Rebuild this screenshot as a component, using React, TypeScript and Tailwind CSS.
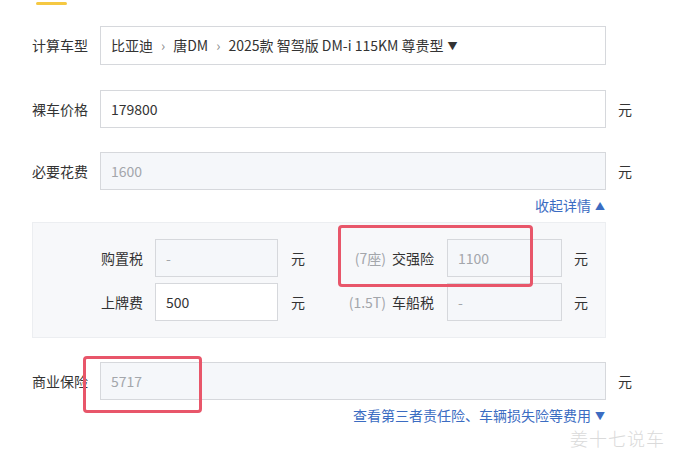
const font = { fontFamily: '"Microsoft YaHei", "Noto Sans CJK SC", "Noto Sans", sans-serif' };

function Field({ value, disabled, className = "" }: { value: string; disabled?: boolean; className?: string }) {
  return (
    <div
      className={`flex h-[38px] items-center border border-[#d6d8dc] px-[10px] text-[14px] ${
        disabled ? "bg-[#f5f7fa] text-[#a3a6ab]" : "bg-white text-[#333]"
      } ${className}`}
    >
      {value}
    </div>
  );
}

function Row({ label, children, unit = true }: { label: string; children: React.ReactNode; unit?: boolean }) {
  return (
    <div className="flex items-center">
      <span className="w-[68px] shrink-0 text-[14px] text-[#333]">{label}</span>
      <div className="w-[506px] shrink-0">{children}</div>
      {unit && <span className="ml-[12px] text-[14px] text-[#333]">元</span>}
    </div>
  );
}

export default function App() {
  return (
    <div className="relative h-[457px] w-[673px] overflow-hidden bg-white" style={font}>
      <div className="ml-[36px] mt-[2px] h-[3px] w-[31px] rounded-full bg-[#f5c842]" />

      <div className="flex flex-col pl-[32px] pt-[21px]">
        <Row label="计算车型" unit={false}>
          <div className="flex h-[39px] items-center border border-[#d6d8dc] bg-white px-[10px] text-[14px] text-[#333]">
            <span>比亚迪</span>
            <span className="mx-[8px] text-[#888]">›</span>
            <span>唐DM</span>
            <span className="mx-[8px] text-[#888]">›</span>
            <span>2025款 智驾版 DM-i 115KM 尊贵型</span>
            <span className="ml-[4px] text-[10px]">▼</span>
          </div>
        </Row>

        <div className="mt-[25px]">
          <Row label="裸车价格">
            <Field value="179800" />
          </Row>
        </div>

        <div className="mt-[24px]">
          <Row label="必要花费">
            <Field value="1600" disabled />
          </Row>
        </div>

        <div className="mt-[5px] flex w-[573px] justify-end text-[14px] text-[#3b6cc2]">
          收起详情<span className="ml-[4px] text-[10px] leading-[21px]">▲</span>
        </div>

        <div className="mt-[6px] w-[574px] border border-[#eceef1] bg-[#f7f8fa] py-[16px]">
          <div className="grid grid-cols-[110px_135px_27px_129px_128px_40px] items-center gap-y-[6px]">
            <span className="text-right text-[14px] text-[#333]">购置税</span>
            <Field value="-" disabled className="ml-[12px] w-[123px]" />
            <span className="pl-[13px] text-[14px] text-[#333]">元</span>
            <span className="text-right text-[14px] text-[#333]">
              <span className="mr-[6px] text-[#a3a6ab]">(7座)</span>交强险
            </span>
            <Field value="1100" disabled className="ml-[13px] w-[115px]" />
            <span className="pl-[12px] text-[14px] text-[#333]">元</span>

            <span className="text-right text-[14px] text-[#333]">上牌费</span>
            <Field value="500" className="ml-[12px] w-[123px]" />
            <span className="pl-[13px] text-[14px] text-[#333]">元</span>
            <span className="text-right text-[14px] text-[#333]">
              <span className="mr-[6px] text-[#a3a6ab]">(1.5T)</span>车船税
            </span>
            <Field value="-" disabled className="ml-[13px] w-[115px]" />
            <span className="pl-[12px] text-[14px] text-[#333]">元</span>
          </div>
        </div>

        <div className="mt-[24px]">
          <Row label="商业保险">
            <Field value="5717" disabled />
          </Row>
        </div>

        <div className="mt-[5px] flex w-[573px] justify-end text-[14px] text-[#3b6cc2]">
          查看第三者责任险、车辆损失险等费用<span className="ml-[4px] text-[10px] leading-[21px]">▼</span>
        </div>
      </div>

      <div className="absolute left-[570px] top-[427px] text-[18px] font-light leading-[22px] tracking-[1px] text-[#dadada]">
        姜十七说车
      </div>

      <div className="pointer-events-none absolute left-[338px] top-[225px] h-[62px] w-[195px] rounded-[4px] border-[3px] border-[#e8566a]" />
      <div className="pointer-events-none absolute left-[83px] top-[356px] h-[57px] w-[119px] rounded-[4px] border-[3px] border-[#e8566a]" />
    </div>
  );
}
